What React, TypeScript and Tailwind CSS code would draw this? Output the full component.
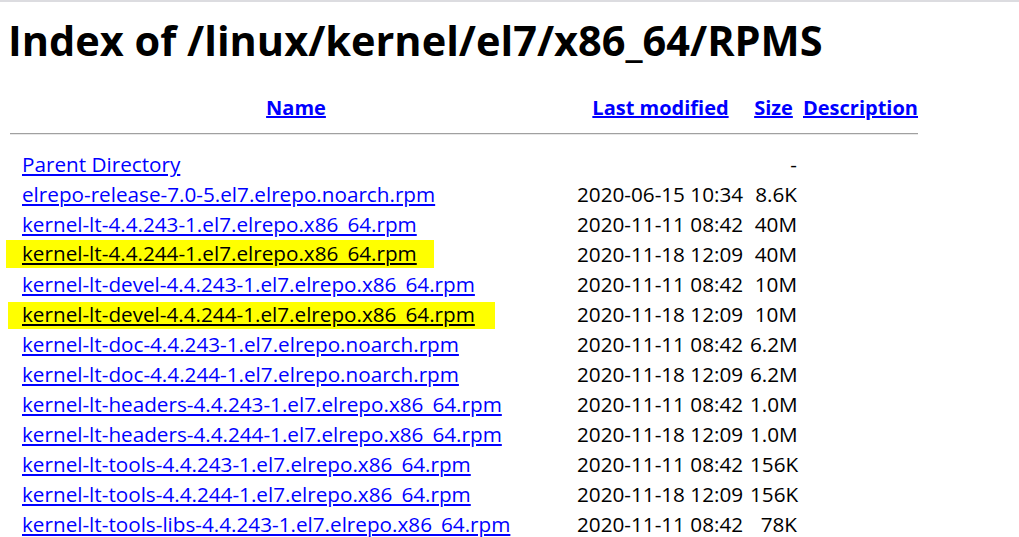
import React from "react";

const rows: { name: string; date: string; size: string; hl?: string }[] = [
  { name: "Parent Directory", date: "", size: "-" },
  { name: "elrepo-release-7.0-5.el7.elrepo.noarch.rpm", date: "2020-06-15 10:34", size: "8.6K" },
  { name: "kernel-lt-4.4.243-1.el7.elrepo.x86_64.rpm", date: "2020-11-11 08:42", size: "40M" },
  { name: "kernel-lt-4.4.244-1.el7.elrepo.x86_64.rpm", date: "2020-11-18 12:09", size: "40M", hl: "a" },
  { name: "kernel-lt-devel-4.4.243-1.el7.elrepo.x86_64.rpm", date: "2020-11-11 08:42", size: "10M" },
  { name: "kernel-lt-devel-4.4.244-1.el7.elrepo.x86_64.rpm", date: "2020-11-18 12:09", size: "10M", hl: "b" },
  { name: "kernel-lt-doc-4.4.243-1.el7.elrepo.noarch.rpm", date: "2020-11-11 08:42", size: "6.2M" },
  { name: "kernel-lt-doc-4.4.244-1.el7.elrepo.noarch.rpm", date: "2020-11-18 12:09", size: "6.2M" },
  { name: "kernel-lt-headers-4.4.243-1.el7.elrepo.x86_64.rpm", date: "2020-11-11 08:42", size: "1.0M" },
  { name: "kernel-lt-headers-4.4.244-1.el7.elrepo.x86_64.rpm", date: "2020-11-18 12:09", size: "1.0M" },
  { name: "kernel-lt-tools-4.4.243-1.el7.elrepo.x86_64.rpm", date: "2020-11-11 08:42", size: "156K" },
  { name: "kernel-lt-tools-4.4.244-1.el7.elrepo.x86_64.rpm", date: "2020-11-18 12:09", size: "156K" },
  { name: "kernel-lt-tools-libs-4.4.243-1.el7.elrepo.x86_64.rpm", date: "2020-11-11 08:42", size: "78K" },
];

export default function App() {
  return (
    <div
      className="w-[1019px] h-[537px] overflow-hidden bg-white text-black relative"
      style={{ fontFamily: '"Open Sans", "Noto Sans CJK SC", sans-serif' }}
    >
      <div className="h-[2px] bg-[#dcdce0]" />
      <h1 className="ml-[8px] mt-[12px] text-[41.5px] leading-[52px] font-bold whitespace-nowrap">
        Index of /linux/kernel/el7/x86_64/RPMS
      </h1>
      <div className="mt-[29px] flex h-[26px] items-center text-[20px] font-bold text-[#0000ff]">
        <div className="w-[570px] pl-[22px] text-center">
          <span className="underline">Name</span>
        </div>
        <div className="w-[174px] pl-[7px] text-center">
          <span className="underline">Last modified</span>
        </div>
        <div className="w-[59px] text-center">
          <span className="underline">Size</span>
        </div>
        <div className="w-[115px]">
          <span className="underline">Description</span>
        </div>
      </div>
      <div className="ml-[10px] mt-[12px] w-[908px] h-[2px] border-t border-b border-t-[#a0a0a0] border-b-[#e8e8e8]" />
      <div className="mt-[15px] flex flex-col text-[20.7px]">
        {rows.map((r, i) => (
          <div key={i} className="flex h-[30px] items-center whitespace-nowrap">
            <div className="w-[577px] flex">
              <div
                className={
                  r.hl === "a"
                    ? "ml-[6px] pl-[16px] pr-[17px] bg-[#ffff00] h-[28px] -mt-[3px] flex items-center"
                    : r.hl === "b"
                    ? "ml-[8px] pl-[14px] pr-[20px] bg-[#ffff00] h-[27px] flex items-center"
                    : "ml-[22px] h-[28px] flex items-center"
                }
              >
                <span className={r.hl ? "underline text-black decoration-black" : "underline text-[#0000ff]"}>{r.name}</span>
              </div>
            </div>
            <div className="w-[173px]">{r.date}</div>
            <div className="w-[47px] text-right">{r.size}</div>
            <div className="w-[115px]" />
          </div>
        ))}
      </div>
    </div>
  );
}
